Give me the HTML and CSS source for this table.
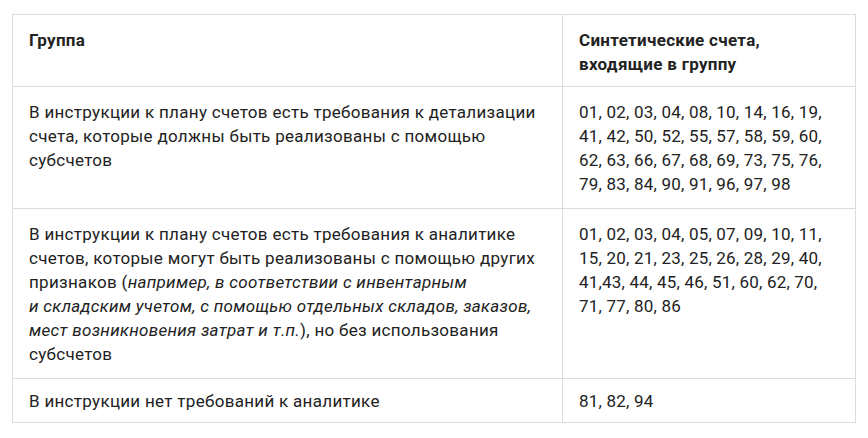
FILE: index.html
```html
<!DOCTYPE html>
<html lang="ru">
<head>
<meta charset="utf-8">
<link rel="stylesheet" href="styles.css">
</head>
<body>
<div class="wrap">
<table class="accounts">
  <colgroup>
    <col class="col-group">
    <col class="col-accounts">
  </colgroup>
  <thead>
    <tr>
      <th>Группа</th>
      <th>Синтетические счета,<br>входящие в группу</th>
    </tr>
  </thead>
  <tbody>
    <tr>
      <td class="desc">В инструкции к плану счетов есть требования к детализации счета, которые должны быть реализованы с помощью субсчетов</td>
      <td class="nums">01, 02, 03, 04, 08, 10, 14, 16, 19, 41, 42, 50, 52, 55, 57, 58, 59, 60, 62, 63, 66, 67, 68, 69, 73, 75, 76, 79, 83, 84, 90, 91, 96, 97, 98</td>
    </tr>
    <tr>
      <td class="desc">В инструкции к плану счетов есть требования к аналитике счетов, которые могут быть реализованы с помощью других признаков (<em>например, в соответствии с инвентарным и&nbsp;складским учетом, с помощью отдельных складов, заказов, мест возникновения затрат и т.п.</em>), но без использования субсчетов</td>
      <td class="nums">01, 02, 03, 04, 05, 07, 09, 10, 11, 15, 20, 21, 23, 25, 26, 28, 29, 40, 41,43, 44, 45, 46, 51, 60, 62, 70, 71, 77, 80, 86</td>
    </tr>
    <tr class="last">
      <td class="desc">В инструкции нет требований к аналитике</td>
      <td class="nums">81, 82, 94</td>
    </tr>
  </tbody>
</table>
</div>
</body>
</html>
```
FILE: styles.css
```css
html, body {
  margin: 0;
  padding: 0;
  background: #ffffff;
}

.wrap {
  padding: 14px 0 0 12px;
}

.accounts {
  border-collapse: collapse;
  table-layout: fixed;
  width: 843px;
  font-family: Roboto, "Noto Sans", sans-serif;
  font-size: 17px;
  line-height: 24px;
  color: #222222;
}

.col-group {
  width: 550px;
}

.col-accounts {
  width: 293px;
}

.accounts th,
.accounts td {
  border: 1px solid #dcdcdc;
  padding: 13px 16px 12px;
  text-align: left;
  vertical-align: top;
}

.accounts th {
  font-weight: 700;
  font-size: 17px;
  letter-spacing: 0.3px;
  padding-bottom: 10px;
}

.accounts .desc {
  letter-spacing: 0.3px;
}

.accounts .nums {
  letter-spacing: 0.2px;
}

.accounts em {
  font-style: italic;
}

.accounts .last td {
  padding-top: 10px;
  padding-bottom: 9px;
}
```
